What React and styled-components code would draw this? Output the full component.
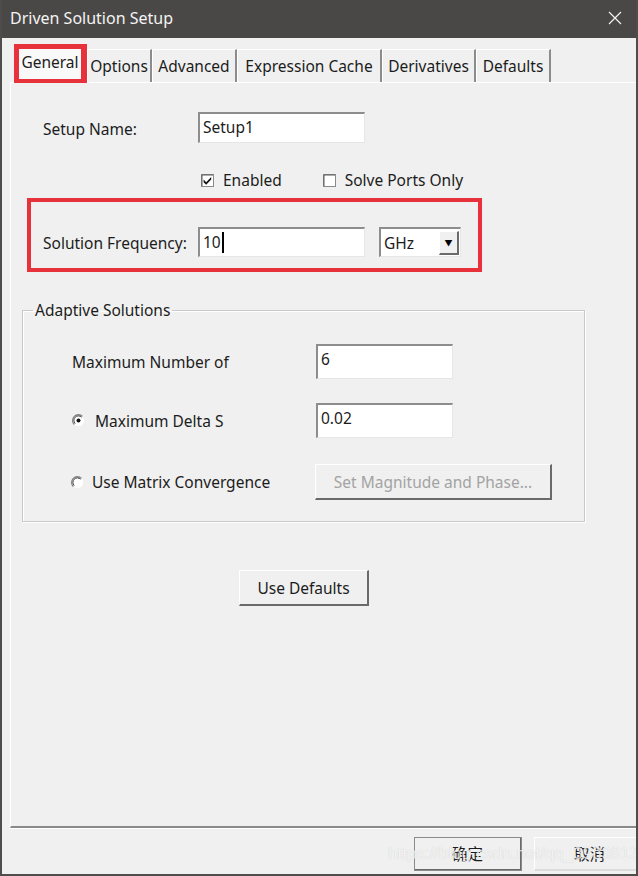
import React from 'react';
import styled, { createGlobalStyle } from 'styled-components';

const GlobalStyle = createGlobalStyle`
  html, body {
    margin: 0;
    padding: 0;
    background: #f0f0f0;
  }
  * {
    box-sizing: border-box;
  }
`;

const tabs = [
  { label: 'General', width: 73 },
  { label: 'Options', width: 65 },
  { label: 'Advanced', width: 85 },
  { label: 'Expression Cache', width: 145 },
  { label: 'Derivatives', width: 94 },
  { label: 'Defaults', width: 75 },
];

const CheckIcon = ({ checked }) => (
  <svg width="13" height="13" viewBox="0 0 13 13">
    <rect x="0.5" y="0.5" width="12" height="12" fill="#fff" stroke="#8a8a8a" />
    <path d="M1 12V1h11" fill="none" stroke="#5a5a5a" strokeWidth="1" />
    {checked && <path d="M2.6 5.6l2.6 2.6L10.2 3v2.6L5.2 10.8 2.6 8.2z" fill="#111" />}
  </svg>
);

const RadioIcon = ({ checked }) => (
  <svg width="13" height="13" viewBox="0 0 13 13">
    <circle cx="6.5" cy="6.5" r="5.6" fill="#fff" />
    <path d="M2.3 10.5A5.6 5.6 0 0 1 10.5 2.3" fill="none" stroke="#7d7d7d" strokeWidth="1.2" />
    <path d="M3.2 9.6A4.4 4.4 0 0 1 9.6 3.2" fill="none" stroke="#3c3c3c" strokeWidth="1" />
    {checked && <circle cx="6.5" cy="6.5" r="2" fill="#111" />}
  </svg>
);

const CloseIcon = () => (
  <svg width="14" height="14" viewBox="0 0 14 14">
    <path d="M1 1l12 12M13 1L1 13" stroke="#f2f2f2" strokeWidth="1.2" />
  </svg>
);

const App = () => {
  return (
    <>
      <GlobalStyle />
      <Window>
        <TitleBar>
          <Title>Driven Solution Setup</Title>
          <CloseButton><CloseIcon /></CloseButton>
        </TitleBar>
        <Body>
          <TabStrip>
            {tabs.map((t, i) => (
              <Tab key={t.label} $w={t.width} $active={i === 0} $marked={i === 0}>{t.label}</Tab>
            ))}
          </TabStrip>
          <Panel>
            <FieldRow>
              <Label>Setup Name:</Label>
              <TextBox $w={167} $h={31}>Setup1</TextBox>
            </FieldRow>
            <CheckRow>
              <Check><CheckIcon checked />Enabled</Check>
              <Check><CheckIcon />Solve Ports Only</Check>
            </CheckRow>
            <Highlight>
              <FieldRow>
                <Label>Solution Frequency:</Label>
                <TextBox $w={167} $h={30}>10<Caret /></TextBox>
                <Select>
                  <span>GHz</span>
                  <DropButton>▼</DropButton>
                </Select>
              </FieldRow>
            </Highlight>
            <Group>
              <Legend>Adaptive Solutions</Legend>
              <GroupRow $top={24}>
                <GroupLabel>Maximum Number of</GroupLabel>
                <TextBox $w={137} $h={35}>6</TextBox>
              </GroupRow>
              <GroupRow $top={24}>
                <GroupLabel><RadioIcon checked /><RadioText $gap={10}>Maximum Delta S</RadioText></GroupLabel>
                <TextBox $w={137} $h={35}>0.02</TextBox>
              </GroupRow>
              <GroupRow $top={26}>
                <GroupLabel $shift={-1}><RadioIcon /><RadioText $gap={8}>Use Matrix Convergence</RadioText></GroupLabel>
                <Button $w={237} $h={36} disabled>Set Magnitude and Phase...</Button>
              </GroupRow>
            </Group>
            <DefaultsWrap>
              <Button $w={130} $h={36}>Use Defaults</Button>
            </DefaultsWrap>
          </Panel>
          <Footer>
            <Button $w={108} $h={34} $strong>确定</Button>
            <Button $w={112} $h={34} $flat>取消</Button>
            <Watermark>https://blog.csdn.net/qq_39338131</Watermark>
          </Footer>
        </Body>
      </Window>
    </>
  );
};

const Window = styled.div`
  position: relative;
  width: 638px;
  height: 876px;
  overflow: hidden;
  display: flex;
  flex-direction: column;
  background: #f0f0f0;
  border-left: 2px solid #4f4d4b;
  border-right: 2px solid #4f4d4b;
  border-bottom: 2px solid #4f4d4b;
  font-family: "Noto Sans", "Noto Sans CJK SC", sans-serif;
  font-size: 15.5px;
  color: #1c1c1c;
`;

const TitleBar = styled.div`
  height: 38px;
  margin: 0 -2px;
  padding: 0 10px 2px 10px;
  display: flex;
  align-items: center;
  justify-content: space-between;
  background: #4a4846;
  color: #f4f4f4;
`;

const Title = styled.div`
  font-size: 16px;
`;

const CloseButton = styled.div`
  display: flex;
  align-items: center;
  margin-right: 6px;
`;

const Body = styled.div`
  flex: 1;
  display: flex;
  flex-direction: column;
  padding: 6px 0 0 8px;
`;

const TabStrip = styled.div`
  display: flex;
  align-items: flex-end;
  height: 38px;
  padding-left: 4px;
`;

const Tab = styled.div`
  width: ${(p) => p.$w}px;
  height: ${(p) => (p.$active ? '39px' : '33px')};
  margin-bottom: ${(p) => (p.$active ? '-1px' : '0')};
  padding-bottom: ${(p) => (p.$active ? '4px' : '0')};
  display: flex;
  align-items: center;
  justify-content: center;
  white-space: nowrap;
  background: ${(p) => (p.$active ? '#f9f9f9' : '#f0f0f0')};
  border-top: 1px solid #fff;
  border-left: 1px solid #fff;
  border-right: 2px solid #8c8c8c;
  box-shadow: ${(p) => (p.$marked ? 'inset 0 0 0 4px #e8323b' : 'none')};
  border-color: ${(p) => (p.$marked ? '#e8323b' : '')};
  position: relative;
  z-index: ${(p) => (p.$active ? 1 : 0)};
`;

const Panel = styled.div`
  flex: 1;
  display: flex;
  flex-direction: column;
  align-items: flex-start;
  border-top: 1px solid #fff;
  border-left: 1px solid #fff;
  border-bottom: 2px solid #8a8a8a;
  box-shadow: 0 1px 0 #fff;
`;

const FieldRow = styled.div`
  display: flex;
  align-items: center;
  margin-top: 29px;
  margin-left: 32px;
`;

const Label = styled.div`
  width: 155px;
  padding-top: 2px;
`;

const TextBox = styled.div`
  width: ${(p) => p.$w}px;
  height: ${(p) => p.$h}px;
  display: flex;
  align-items: flex-start;
  padding: 2px 4px 0 3px;
  background: #fff;
  border-top: 2px solid #8d8d8d;
  border-left: 2px solid #8d8d8d;
  border-bottom: 1px solid #e6e6e6;
  border-right: 1px solid #e6e6e6;
  line-height: 22px;
`;

const Caret = styled.span`
  display: inline-block;
  width: 2px;
  height: 21px;
  margin-top: 1px;
  margin-left: 1px;
  background: #000;
`;

const CheckRow = styled.div`
  display: flex;
  align-items: center;
  gap: 41px;
  height: 20px;
  margin-top: 27px;
  margin-left: 190px;
`;

const Check = styled.label`
  display: flex;
  align-items: center;
  gap: 9px;
`;

const Highlight = styled.div`
  margin-top: 8px;
  margin-left: 16px;
  width: 455px;
  height: 74px;
  border: 4px solid #e8323b;
  padding: 0;

  ${FieldRow} {
    margin: 25px 0 0 12px;
  }
`;

const Select = styled.div`
  margin-left: 14px;
  width: 82px;
  height: 30px;
  display: flex;
  align-items: center;
  justify-content: space-between;
  padding: 0 1px 0 3px;
  background: #fff;
  border-top: 2px solid #8d8d8d;
  border-left: 2px solid #8d8d8d;
  border-bottom: 1px solid #e6e6e6;
  border-right: 1px solid #e6e6e6;
`;

const DropButton = styled.div`
  width: 20px;
  height: 24px;
  display: flex;
  align-items: center;
  justify-content: center;
  font-size: 8px;
  color: #000;
  background: #f0f0f0;
  border-top: 1px solid #fff;
  border-left: 1px solid #fff;
  border-right: 2px solid #6a6a6a;
  border-bottom: 2px solid #6a6a6a;
`;

const Group = styled.fieldset`
  margin: 28px 0 0 11px;
  width: 563px;
  padding: 0 0 21px 0;
  border: 1px solid #c9c9c9;
  box-shadow: inset 1px 1px 0 #fff, 1px 1px 0 #fff;
`;

const Legend = styled.legend`
  margin-left: 10px;
  padding: 0 2px;
  line-height: 20px;
`;

const GroupRow = styled.div`
  display: flex;
  align-items: center;
  margin-top: ${(p) => p.$top}px;
  margin-left: 49px;
`;

const GroupLabel = styled.div`
  width: 244px;
  display: flex;
  align-items: center;
  margin-left: ${(p) => p.$shift || 0}px;
`;

const RadioText = styled.span`
  margin-left: ${(p) => p.$gap}px;
`;

const Button = styled.button`
  width: ${(p) => p.$w}px;
  height: ${(p) => p.$h}px;
  font: inherit;
  color: ${(p) => (p.disabled ? '#a3a3a3' : '#1c1c1c')};
  background: #f0f0f0;
  border-top: 1px solid #fff;
  border-left: 1px solid #fff;
  border-right: 2px solid ${(p) => (p.$flat ? '#dcdcdc' : '#6a6a6a')};
  border-bottom: 2px solid ${(p) => (p.$flat ? '#dcdcdc' : '#6a6a6a')};
  outline: ${(p) => (p.$strong ? '1px solid #8a8a8a' : 'none')};
  outline-offset: -1px;
  padding: 0;
  flex-shrink: 0;
`;

const DefaultsWrap = styled.div`
  margin-top: 48px;
  margin-left: 228px;
`;

const Footer = styled.div`
  position: relative;
  display: flex;
  gap: 12px;
  height: 46px;
  padding: 9px 0 0 404px;
`;

const Watermark = styled.div`
  position: absolute;
  left: 378px;
  top: 16px;
  font-family: "Liberation Sans", sans-serif;
  font-size: 17px;
  color: rgba(255, 255, 255, 0.75);
  text-shadow: 0 0 1px rgba(120, 120, 120, 0.35);
  white-space: nowrap;
  pointer-events: none;
`;

export default App;
